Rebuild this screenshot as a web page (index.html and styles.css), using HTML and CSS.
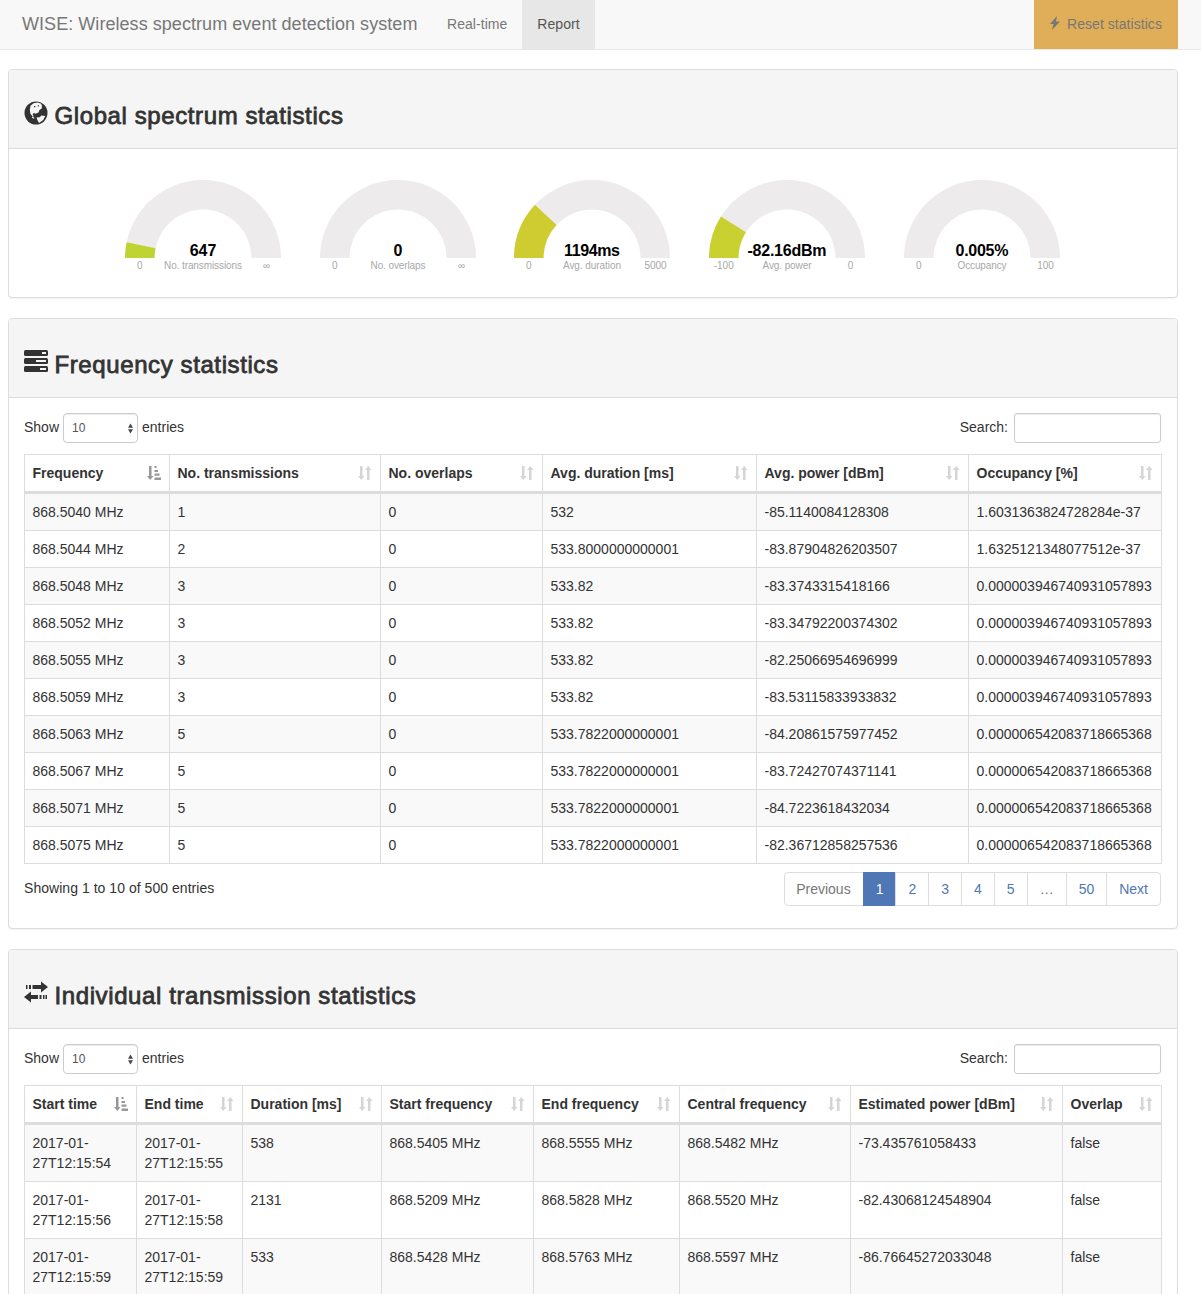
FILE: index.html
```html
<!DOCTYPE html>
<html lang="en">
<head>
    <meta charset="UTF-8">
    <meta name="viewport" content="width=device-width, initial-scale=1.0">
    <title>WISE: Wireless spectrum event detection system</title>
    <link rel="stylesheet" href="styles.css">
</head>
<body>
    <svg class="symbols">
        <symbol id="sort-both" viewBox="0 0 14 14">
            <path d="M2 0h2.500v10h2L3.250 14 0 10h2zM9 14V4H7l3.250-4L13.500 4h-2v10z"/>
        </symbol>
        <symbol id="sort-asc" viewBox="0 0 14 14">
            <path d="M2 0h2.500v10h2L3.250 14 0 10h2zM7.500 0h2v2h-2zM7.500 4h3.500v2H7.500zM7.500 7.500h5v2.200h-5zM7.500 11.500H14V14H7.500z"/>
        </symbol>
    </svg>

    <nav class="navbar">
        <a class="navbar-brand" href="#">WISE: Wireless spectrum event detection system</a>
        <a class="nav-link" href="#">Real-time</a>
        <a class="nav-link active" href="#">Report</a>
        <a class="nav-link reset" href="#"><svg class="flash" viewBox="0 0 12 14"><path d="M8 0L1 8h3.600L3 14l8-8.500H7z"/></svg>Reset statistics</a>
    </nav>

    <div class="panel">
        <div class="panel-heading">
            <svg class="icon" viewBox="0 0 24 24">
                <circle cx="12" cy="12" r="11.500"/>
                <path class="land" d="M6.500 4.800L9.500 2.200l4-.6 3.300 1 1.200 2-.2 3-2.300 1.400-1 2.600-3 1.100L10 12l-1.500 1.200 1.300 2-1.200.4-2.200-2.900-.6-4z"/>
                <path class="land" d="M12.500 16.500l3-.3 2-1.700 3.700.6-2 4-4.200 2.800-1.600-2.800z"/>
                <path class="land" d="M8 15.500l2.500 1.300-.5.900-2-1z"/>
                <path d="M10 5h1.300v1.200H10zM13.800 4.200h1.200v1.200h-1.200z"/>
            </svg>
            <h3>Global spectrum statistics</h3>
        </div>
        <div class="gauges">
            <div class="gauge">
                <svg viewBox="0 0 156 95">
                    <path class="track" d="M0 78a78 78 0 0 1 156 0h-29.500a48.500 48.500 0 0 0-97 0z"/>
                    <path fill="#bfd432" d="M0 78A78 78 0 0 1 1.610 62.250L30.500 68.200A48.500 48.500 0 0 0 29.500 78z"/>
                    <text class="value" x="78" y="76">647</text>
                    <text x="14.700" y="89">0</text>
                    <text x="78" y="89" textLength="78">No. transmissions</text>
                    <text x="141.500" y="89">∞</text>
                </svg>
            </div>
            <div class="gauge">
                <svg viewBox="0 0 156 95">
                    <path class="track" d="M0 78a78 78 0 0 1 156 0h-29.500a48.500 48.500 0 0 0-97 0z"/>
                    <text class="value" x="78" y="76">0</text>
                    <text x="14.700" y="89">0</text>
                    <text x="78" y="89" textLength="55">No. overlaps</text>
                    <text x="141.500" y="89">∞</text>
                </svg>
            </div>
            <div class="gauge">
                <svg viewBox="0 0 156 95">
                    <path class="track" d="M0 78a78 78 0 0 1 156 0h-29.500a48.500 48.500 0 0 0-97 0z"/>
                    <path fill="#cfcc31" d="M0 78A78 78 0 0 1 20.950 24.800L42.530 44.920A48.500 48.500 0 0 0 29.500 78z"/>
                    <text class="value" x="78" y="76" textLength="56">1194ms</text>
                    <text x="14.700" y="89">0</text>
                    <text x="78" y="89" textLength="58">Avg. duration</text>
                    <text x="141.500" y="89">5000</text>
                </svg>
            </div>
            <div class="gauge">
                <svg viewBox="0 0 156 95">
                    <path class="track" d="M0 78a78 78 0 0 1 156 0h-29.500a48.500 48.500 0 0 0-97 0z"/>
                    <path fill="#c8d12f" d="M0 78A78 78 0 0 1 11.920 36.550L36.910 52.230A48.500 48.500 0 0 0 29.500 78z"/>
                    <text class="value" x="78" y="76" textLength="79">-82.16dBm</text>
                    <text x="14.700" y="89">-100</text>
                    <text x="78" y="89" textLength="49">Avg. power</text>
                    <text x="141.500" y="89">0</text>
                </svg>
            </div>
            <div class="gauge">
                <svg viewBox="0 0 156 95">
                    <path class="track" d="M0 78a78 78 0 0 1 156 0h-29.500a48.500 48.500 0 0 0-97 0z"/>
                    <text class="value" x="78" y="76" textLength="53">0.005%</text>
                    <text x="14.700" y="89">0</text>
                    <text x="78" y="89" textLength="49">Occupancy</text>
                    <text x="141.500" y="89">100</text>
                </svg>
            </div>
        </div>
    </div>

    <div class="panel">
        <div class="panel-heading">
            <svg class="icon" viewBox="0 0 24 24">
                <rect x="0" y="0" width="24" height="6" rx="1.500"/>
                <rect x="0" y="8" width="24" height="6" rx="1.500"/>
                <rect x="0" y="16" width="24" height="6" rx="1.500"/>
                <path class="land" d="M18 2h4v2h-4zM12 10h10v2H12zM16 18h6v2h-6z"/>
            </svg>
            <h3>Frequency statistics</h3>
        </div>
        <div class="panel-body">
            <div class="table-controls">
                <label>Show
                    <span class="select-wrap">
                        <select><option>10</option><option>25</option><option>50</option></select>
                        <svg viewBox="0 0 6 12"><path d="M0 5l3-5 3 5zM0 7h6l-3 5z"/></svg>
                    </span>
                    entries</label>
                <label>Search:<input type="search"></label>
            </div>
            <table class="table">
                <colgroup><col width="145"><col width="211"><col width="162"><col width="214"><col width="212"><col width="192"></colgroup>
                <thead>
                    <tr>
                        <th class="sorted">Frequency<svg><use href="#sort-asc"/></svg></th>
                        <th>No. transmissions<svg><use href="#sort-both"/></svg></th>
                        <th>No. overlaps<svg><use href="#sort-both"/></svg></th>
                        <th>Avg. duration [ms]<svg><use href="#sort-both"/></svg></th>
                        <th>Avg. power [dBm]<svg><use href="#sort-both"/></svg></th>
                        <th>Occupancy [%]<svg><use href="#sort-both"/></svg></th>
                    </tr>
                </thead>
                <tbody>
                    <tr><td>868.5040 MHz</td><td>1</td><td>0</td><td>532</td><td>-85.1140084128308</td><td>1.6031363824728284e-37</td></tr>
                    <tr><td>868.5044 MHz</td><td>2</td><td>0</td><td>533.8000000000001</td><td>-83.87904826203507</td><td>1.6325121348077512e-37</td></tr>
                    <tr><td>868.5048 MHz</td><td>3</td><td>0</td><td>533.82</td><td>-83.3743315418166</td><td>0.000003946740931057893</td></tr>
                    <tr><td>868.5052 MHz</td><td>3</td><td>0</td><td>533.82</td><td>-83.34792200374302</td><td>0.000003946740931057893</td></tr>
                    <tr><td>868.5055 MHz</td><td>3</td><td>0</td><td>533.82</td><td>-82.25066954696999</td><td>0.000003946740931057893</td></tr>
                    <tr><td>868.5059 MHz</td><td>3</td><td>0</td><td>533.82</td><td>-83.53115833933832</td><td>0.000003946740931057893</td></tr>
                    <tr><td>868.5063 MHz</td><td>5</td><td>0</td><td>533.7822000000001</td><td>-84.20861575977452</td><td>0.000006542083718665368</td></tr>
                    <tr><td>868.5067 MHz</td><td>5</td><td>0</td><td>533.7822000000001</td><td>-83.72427074371141</td><td>0.000006542083718665368</td></tr>
                    <tr><td>868.5071 MHz</td><td>5</td><td>0</td><td>533.7822000000001</td><td>-84.7223618432034</td><td>0.000006542083718665368</td></tr>
                    <tr><td>868.5075 MHz</td><td>5</td><td>0</td><td>533.7822000000001</td><td>-82.36712858257536</td><td>0.000006542083718665368</td></tr>
                </tbody>
            </table>
            <div class="table-footer">
                <div class="info">Showing 1 to 10 of 500 entries</div>
                <ul class="pagination">
                    <li class="disabled">Previous</li>
                    <li class="active">1</li>
                    <li>2</li>
                    <li>3</li>
                    <li>4</li>
                    <li>5</li>
                    <li class="disabled">…</li>
                    <li>50</li>
                    <li>Next</li>
                </ul>
            </div>
        </div>
    </div>

    <div class="panel">
        <div class="panel-heading">
            <svg class="icon" viewBox="0 0 24 24">
                <path d="M2 4h1.500v4H2zM5 4h2v4H5zM8.500 4H17V.500l7 5.500-7 5.500V8H8.500zM0 16l7-5.500V14h7v4H7v3.500zM15.500 14h2v4h-2zM19 14h1.500v4H19zM21.500 14H23v4h-1.500z"/>
            </svg>
            <h3>Individual transmission statistics</h3>
        </div>
        <div class="panel-body">
            <div class="table-controls">
                <label>Show
                    <span class="select-wrap">
                        <select><option>10</option><option>25</option><option>50</option></select>
                        <svg viewBox="0 0 6 12"><path d="M0 5l3-5 3 5zM0 7h6l-3 5z"/></svg>
                    </span>
                    entries</label>
                <label>Search:<input type="search"></label>
            </div>
            <table class="table">
                <colgroup><col width="112"><col width="106"><col width="139"><col width="152"><col width="146"><col width="171"><col width="212"><col width="98"></colgroup>
                <thead>
                    <tr>
                        <th class="sorted">Start time<svg><use href="#sort-asc"/></svg></th>
                        <th>End time<svg><use href="#sort-both"/></svg></th>
                        <th>Duration [ms]<svg><use href="#sort-both"/></svg></th>
                        <th>Start frequency<svg><use href="#sort-both"/></svg></th>
                        <th>End frequency<svg><use href="#sort-both"/></svg></th>
                        <th>Central frequency<svg><use href="#sort-both"/></svg></th>
                        <th>Estimated power [dBm]<svg><use href="#sort-both"/></svg></th>
                        <th>Overlap<svg><use href="#sort-both"/></svg></th>
                    </tr>
                </thead>
                <tbody>
                    <tr><td>2017-01-27T12:15:54</td><td>2017-01-27T12:15:55</td><td>538</td><td>868.5405 MHz</td><td>868.5555 MHz</td><td>868.5482 MHz</td><td>-73.435761058433</td><td>false</td></tr>
                    <tr><td>2017-01-27T12:15:56</td><td>2017-01-27T12:15:58</td><td>2131</td><td>868.5209 MHz</td><td>868.5828 MHz</td><td>868.5520 MHz</td><td>-82.43068124548904</td><td>false</td></tr>
                    <tr><td>2017-01-27T12:15:59</td><td>2017-01-27T12:15:59</td><td>533</td><td>868.5428 MHz</td><td>868.5763 MHz</td><td>868.5597 MHz</td><td>-86.76645272033048</td><td>false</td></tr>
                </tbody>
            </table>
        </div>
    </div>
</body>
</html>
```
FILE: styles.css
```css
* {
    box-sizing: border-box;
}

body {
    font-family: "Helvetica Neue", "Liberation Sans", Arial, sans-serif;
    font-size: 14px;
    line-height: 20px;
    color: #333;
    background-color: #fff;
    margin: 0;
    height: 1294px;
    overflow: hidden;
}

.symbols {
    display: none;
}

/* Navigation */
.navbar {
    display: flex;
    height: 50px;
    padding: 0 23px 0 8px;
    margin-bottom: 19px;
    background-color: #f8f8f8;
    border-bottom: 1px solid #e7e7e7;
}

.navbar a {
    color: #777;
    text-decoration: none;
    white-space: nowrap;
    letter-spacing: 0.05px;
    padding: 14px 15px 15px;
}

.navbar .navbar-brand {
    font-size: 18px;
    width: 424px;
    padding-left: 14px;
    padding-right: 0;
}

.navbar .nav-link.active {
    width: 73px;
    color: #555;
    background-color: #e7e7e7;
}

.navbar .reset {
    width: 144px;
    margin-left: auto;
    background-color: #e0ae58;
}

.flash {
    width: 12px;
    height: 14px;
    fill: #777;
    margin-right: 6px;
    vertical-align: -1px;
}

/* Panels */
.panel {
    width: 1170px;
    margin: 0 0 20px 8px;
    border: 1px solid #ddd;
    border-radius: 4px;
    background-color: #fff;
    box-shadow: 0 1px 1px rgba(0, 0, 0, 0.05);
}

.panel-heading {
    display: flex;
    height: 79px;
    padding: 30px 14.5px 0;
    background-color: #f5f5f5;
    border-bottom: 1px solid #ddd;
    border-radius: 3px 3px 0 0;
}

.panel-heading h3 {
    font-size: 24px;
    font-weight: 400;
    line-height: 26px;
    letter-spacing: 0.6px;
    margin: 3px 0 0 7px;
    -webkit-text-stroke: 0.8px #333;
}

.icon {
    width: 24px;
    height: 24px;
    margin-top: 1px;
    fill: #333;
}

.land {
    fill: #f5f5f5;
}

.panel-body {
    padding: 15px 15px 22px;
}

/* Gauges */
.gauges {
    display: flex;
    height: 148px;
    padding: 30.5px 0 0 96.5px;
}

.gauge {
    flex: 0 0 194.75px;
    text-align: center;
}

.gauge svg {
    width: 156px;
    height: 95px;
}

.gauge text {
    font-family: "Liberation Sans", Arial, sans-serif;
    font-size: 10px;
    text-anchor: middle;
    fill: #a8a8a8;
}

.gauge .value {
    font-size: 16px;
    font-weight: bold;
    fill: #000;
}

.track {
    fill: #edebeb;
}

/* Tables */
.table-controls {
    display: flex;
    justify-content: space-between;
    height: 30px;
    margin-bottom: 11px;
}

.table-controls label {
    display: flex;
    align-items: center;
    gap: 4px;
    height: 28px;
}

.select-wrap {
    position: relative;
    height: 28px;
}

.select-wrap svg {
    position: absolute;
    right: 5px;
    top: 10px;
    width: 5px;
    height: 11px;
    fill: #444;
}

.table-controls select,
.table-controls input {
    appearance: none;
    display: block;
    height: 30px;
    padding: 5px 8px;
    font-family: inherit;
    font-size: 12px;
    color: #555;
    background-color: #fff;
    border: 1px solid #ccc;
    border-radius: 3px;
    box-shadow: inset 0 1px 1px rgba(0, 0, 0, 0.075);
}

.table-controls select {
    width: 75px;
    border-radius: 4px;
}

.table-controls input {
    width: 147px;
    margin: 2px 1px 0 2px;
}

.table {
    width: 1138px;
    table-layout: fixed;
    border: 1px solid #ddd;
    border-collapse: separate;
    border-spacing: 0;
}

.table th,
.table td {
    padding: 8px 8px 8px 7.5px;
    text-align: left;
    vertical-align: top;
    border-right: 1px solid #ddd;
}

.table th:last-child,
.table td:last-child {
    border-right: 0;
}

.table th {
    position: relative;
    white-space: nowrap;
    border-bottom: 2px solid #ddd;
}

.table td {
    border-top: 1px solid #ddd;
}

.table tbody tr:nth-child(odd) {
    background-color: #f9f9f9;
}

.table th svg {
    position: absolute;
    right: 8px;
    bottom: 11px;
    width: 14px;
    height: 14px;
    fill: #333;
    opacity: 0.2;
}

.table th.sorted svg {
    opacity: 0.5;
}

/* Pagination */
.table-footer {
    display: flex;
    justify-content: space-between;
    padding: 8px 1px 0 0;
}

.info {
    padding-top: 6px;
    letter-spacing: 0.04px;
}

.pagination {
    display: flex;
    margin: 0;
    padding: 0;
    list-style: none;
}

.pagination li {
    height: 34px;
    padding: 6px 12px;
    margin-left: -1px;
    color: #4f77b5;
    border: 1px solid #ddd;
}

.pagination li:first-child {
    padding-left: 11.5px;
    border-radius: 4px 0 0 4px;
}

.pagination li:last-child {
    border-radius: 0 4px 4px 0;
}

.pagination .disabled {
    color: #777;
}

.pagination .active {
    color: #fff;
    background-color: #4f77b5;
    border-color: #4f77b5;
}
```
